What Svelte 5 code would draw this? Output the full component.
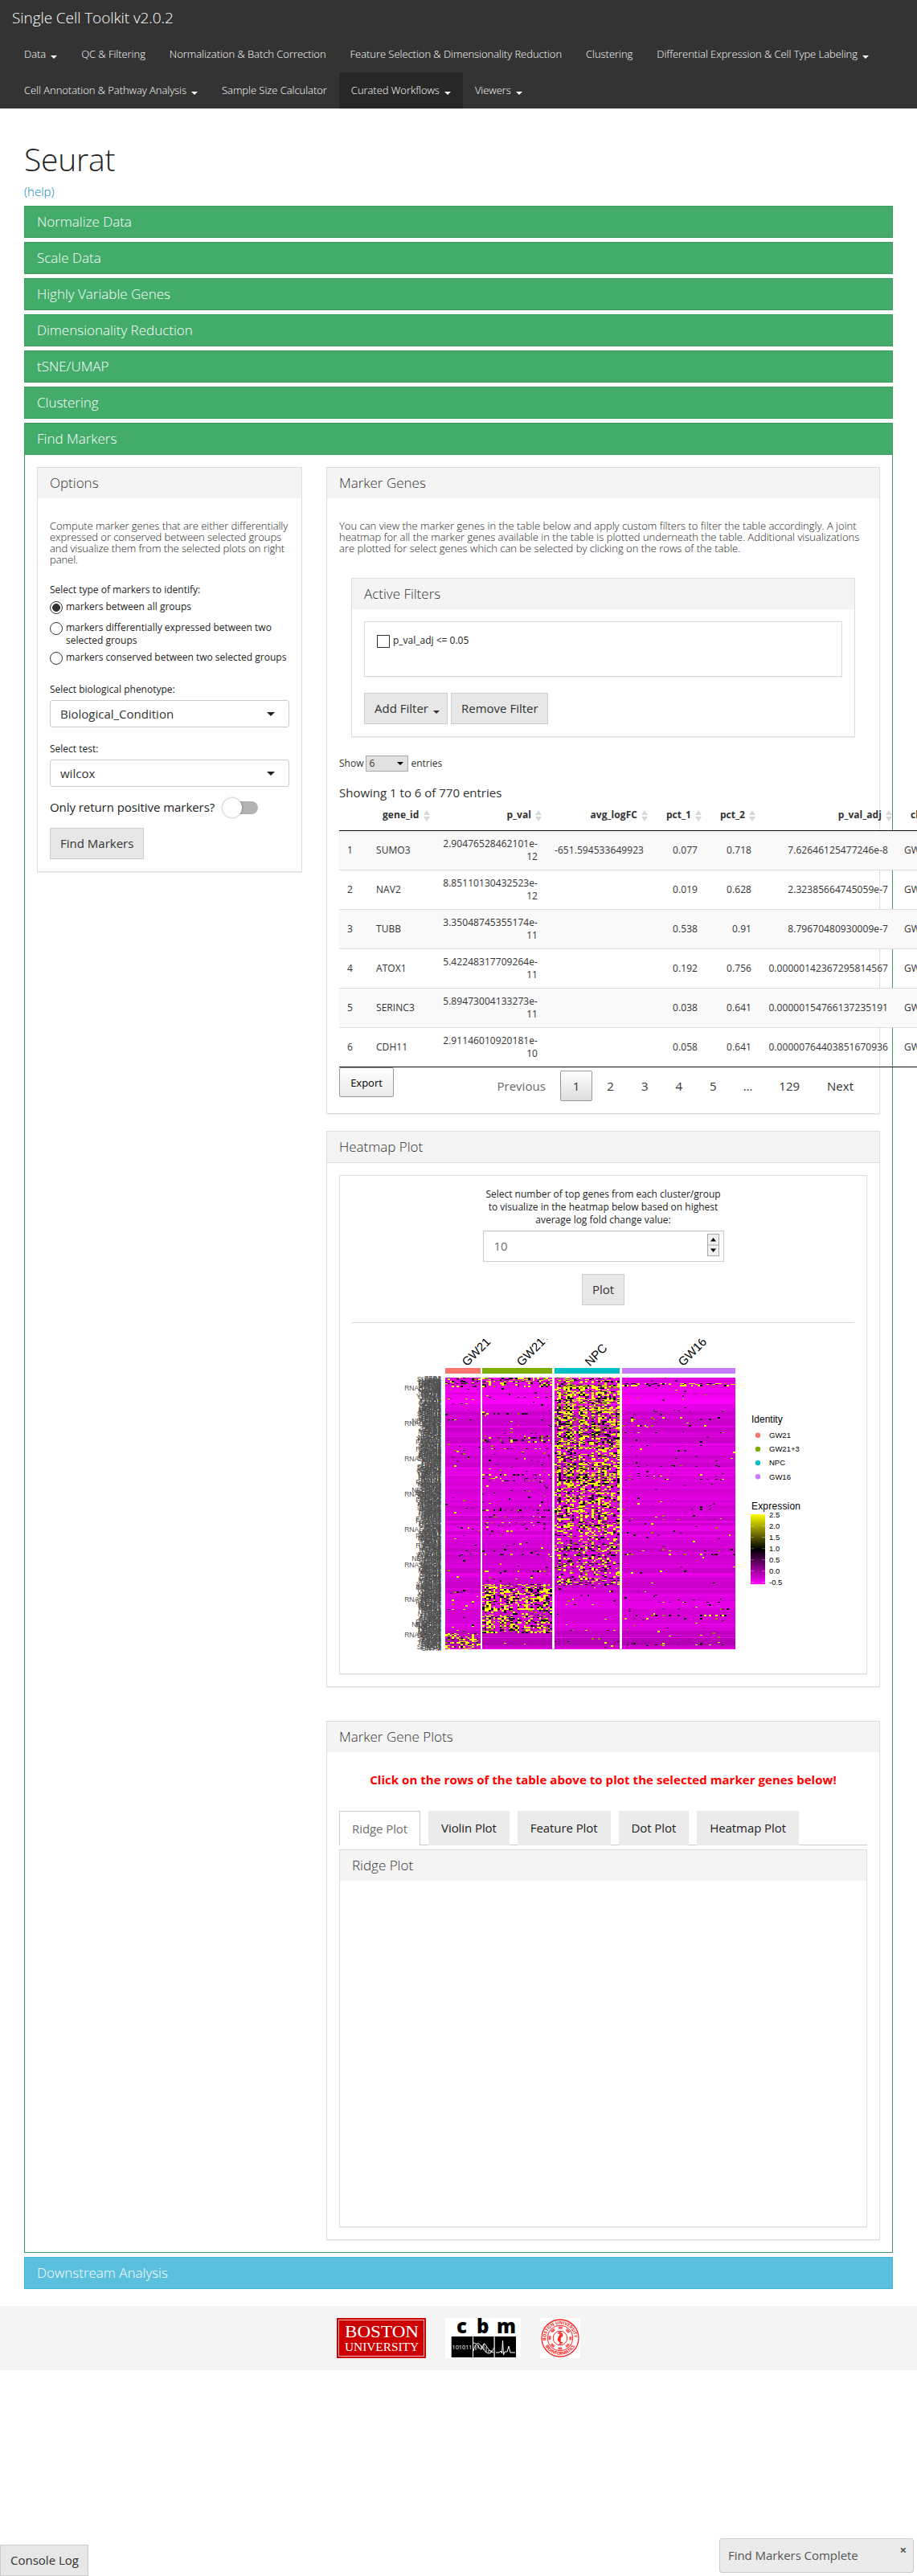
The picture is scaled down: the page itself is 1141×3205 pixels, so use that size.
<script>
  const navRows = [
    [
      { label: 'Data', caret: true },
      { label: 'QC & Filtering' },
      { label: 'Normalization & Batch Correction' },
      { label: 'Feature Selection & Dimensionality Reduction' },
      { label: 'Clustering' },
      { label: 'Differential Expression & Cell Type Labeling', caret: true },
    ],
    [
      { label: 'Cell Annotation & Pathway Analysis', caret: true },
      { label: 'Sample Size Calculator' },
      { label: 'Curated Workflows', caret: true, active: true },
      { label: 'Viewers', caret: true },
    ],
  ];

  const steps = [
    'Normalize Data',
    'Scale Data',
    'Highly Variable Genes',
    'Dimensionality Reduction',
    'tSNE/UMAP',
    'Clustering',
  ];

  const columns = ['', 'gene_id', 'p_val', 'avg_logFC', 'pct_1', 'pct_2', 'p_val_adj', 'cluster'];
  const rows = [
    ['1', 'SUMO3', '2.90476528462101e-12', '-651.594533649923', '0.077', '0.718', '7.62646125477246e-8', 'GW21'],
    ['2', 'NAV2', '8.85110130432523e-12', '', '0.019', '0.628', '2.32385664745059e-7', 'GW21'],
    ['3', 'TUBB', '3.35048745355174e-11', '', '0.538', '0.91', '8.79670480930009e-7', 'GW21'],
    ['4', 'ATOX1', '5.42248317709264e-11', '', '0.192', '0.756', '0.00000142367295814567', 'GW21'],
    ['5', 'SERINC3', '5.89473004133273e-11', '', '0.038', '0.641', '0.00000154766137235191', 'GW21'],
    ['6', 'CDH11', '2.91146010920181e-10', '', '0.058', '0.641', '0.00000764403851670936', 'GW21'],
  ];

  const tabs = ['Ridge Plot', 'Violin Plot', 'Feature Plot', 'Dot Plot', 'Heatmap Plot'];

  // Heatmap: coordinates are in the plot's own space, 560 x 400.
  const TOP = 48;
  const ROWS = 338;
  const groups = [
    { name: 'GW21', x: 74, w: 44, n: 16, color: '#f8766d', lx: 101 },
    { name: 'GW21+3', x: 120, w: 87, n: 32, color: '#7cae00', lx: 169 },
    { name: 'NPC', x: 210, w: 81, n: 30, color: '#00bfc4', lx: 254 },
    { name: 'GW16', x: 294, w: 141, n: 51, color: '#c77cff', lx: 370 },
  ];

  let seed = 20217;
  function rnd() {
    seed = (seed * 1664525 + 1013904223) % 4294967296;
    return seed / 4294967296;
  }

  function density(g, f) {
    if (g === 0) {
      if (f < 0.035) return 0.22;
      return f > 0.938 ? 0.42 : 0.018;
    }
    if (g === 1) {
      if (f < 0.035) return 0.32;
      if (f < 0.76) return 0.035;
      return f < 0.94 ? 0.46 : 0.01;
    }
    if (g === 2) {
      if (f < 0.025) return 0.35;
      if (f < 0.12) return 0.74;
      if (f < 0.4) return 0.54;
      if (f < 0.55) return 0.44;
      return f < 0.762 ? 0.33 : 0.015;
    }
    return f > 0.02 && f < 0.028 ? 0.4 : 0.02;
  }

  const palette = ['#ffff00', '#000000', '#8b8b00', '#3d003d', '#d4d400', '#8a008a'];
  const cells = palette.map(() => '');
  const stripes = [];
  let level = 230;
  for (let r = 0; r < ROWS; r++) {
    const f = r / ROWS;
    const base = f < 0.1 ? 236 : f > 0.93 ? 188 : 216;
    if (rnd() < 0.35) level = base + (rnd() - 0.5) * 36;
    const line = rnd() < 0.03 ? 255 : Math.round(level);
    stripes.push({ y: TOP + r, fill: `rgb(${line},0,${line})` });
  }
  groups.forEach((g, gi) => {
    const cw = g.w / g.n;
    const weight = Array.from({ length: g.n }, () => 0.35 + rnd() * 1.3);
    let skip = 0;
    for (let r = 0; r < ROWS; r += skip) {
      skip = rnd() < 0.45 ? 2 : 1;
      const h = Math.min(skip, ROWS - r);
      const f = r / ROWS;
      const d = density(gi, f);
      const busy = d < 0.1 ? (rnd() < 0.08 ? 7 : 0.7) : 0.6 + rnd() * 0.8;
      const dense = d > 0.3;
      const yellow = gi === 0 && f > 0.9 ? 0.72 : 0.5;
      for (let c = 0; c < g.n; c++) {
        if (rnd() < d * busy * weight[c]) {
          const t = rnd();
          const k = dense
            ? t < yellow ? 0 : t < 0.74 ? 1 : t < 0.82 ? 2 : t < 0.91 ? 3 : t < 0.94 ? 4 : 5
            : t < 0.2 ? 0 : t < 0.48 ? 1 : t < 0.6 ? 2 : t < 0.78 ? 3 : t < 0.82 ? 4 : 5;
          const x1 = Math.round(g.x + c * cw);
          const x2 = Math.round(g.x + (c + 1) * cw);
          cells[k] += `M${x1} ${TOP + r}h${x2 - x1}v${h}h${x1 - x2}z`;
        }
      }
    }
  });

  const genes = [
    'TUBB3', 'SUMO3', 'NAV2', 'STMN2', 'CDH11', 'LMO3', 'MEF2C', 'FEZF2', 'FAM134', 'ATOX1', 'NFIB', 'MAPT',
    'DCX', 'FABP7', 'SOX11', 'ZEB2', 'APP', 'NEUROD', 'CRYM', 'RAB3A', 'NUSAP', 'TMEM2', 'SYT4', 'YWHAB',
    'BCL11', 'NRXN1', 'TBR1', 'ENC1', 'CALM2', 'KIF5C', 'GRIA2', 'RNF165', 'LINC1', 'ITM2B', 'PAK3', 'UCHL1',
  ];
  const geneLabels = Array.from({ length: 330 }, (_, i) => ({
    text: i % 43 === 12 ? 'RNASEH2B' : genes[Math.floor(rnd() * genes.length)],
    y: 52 + i * 1.02,
  }));

  const scale = ['2.5', '2.0', '1.5', '1.0', '0.5', '0.0', '-0.5'];
</script>

<nav class="navbar">
  <div class="brand">Single Cell Toolkit v2.0.2</div>
  {#each navRows as row}
    <div class="nav-row">
      {#each row as item}
        <span class="nav-item" class:active={item.active}>
          {item.label}{#if item.caret}<i class="caret"></i>{/if}
        </span>
      {/each}
    </div>
  {/each}
</nav>

<main>
  <h1>Seurat</h1>
  <a class="help" href="#help">(help)</a>

  {#each steps as step}
    <div class="step">{step}</div>
  {/each}

  <section class="open-step">
    <div class="step-head">Find Markers</div>
    <div class="split">
      <aside class="panel">
        <div class="head">Options</div>
        <div class="options">
          <p class="note">Compute marker genes that are either differentially expressed or conserved between selected groups and visualize them from the selected plots on right panel.</p>
          <div class="label first">Select type of markers to identify:</div>
          <div class="radio r1"><i class="dot on"></i><span>markers between all groups</span></div>
          <div class="radio r2"><i class="dot"></i><span>markers differentially expressed between two selected groups</span></div>
          <div class="radio"><i class="dot"></i><span>markers conserved between two selected groups</span></div>
          <div class="label spaced">Select biological phenotype:</div>
          <div class="picker"><span>Biological_Condition</span><i class="arrow"></i></div>
          <div class="label mid">Select test:</div>
          <div class="picker"><span>wilcox</span><i class="arrow"></i></div>
          <div class="toggle-row"><span>Only return positive markers?</span><i class="toggle"></i></div>
          <button class="btn">Find Markers</button>
        </div>
      </aside>

      <div class="results">
        <section class="panel genes">
          <div class="head">Marker Genes</div>
          <p class="note wide">You can view the marker genes in the table below and apply custom filters to filter the table accordingly. A joint heatmap for all the marker genes available in the table is plotted underneath the table. Additional visualizations are plotted for select genes which can be selected by clicking on the rows of the table.</p>

          <div class="panel filters">
            <div class="head">Active Filters</div>
            <div class="filter-box"><i class="check"></i><span>p_val_adj &lt;= 0.05</span></div>
            <div class="buttons">
              <button class="btn add">Add Filter<i class="caret"></i></button>
              <button class="btn remove">Remove Filter</button>
            </div>
          </div>

          <div class="show">
            <span>Show</span>
            <span class="count">6<i class="arrow small"></i></span>
            <span>entries</span>
          </div>
          <div class="info">Showing 1 to 6 of 770 entries</div>

          <table>
            <colgroup>
              {#each columns as c, i}<col class="c{i}" />{/each}
            </colgroup>
            <thead>
              <tr>
                {#each columns as c, i}
                  <th class:left={i === 1 || i === 7}>
                    {c}{#if i > 0}<svg class="sort" viewBox="0 0 8 14"><path d="M4 0L8 6H0zM4 14L0 8H8z" /></svg>{/if}
                  </th>
                {/each}
              </tr>
            </thead>
            <tbody>
              {#each rows as row}
                <tr>
                  {#each row as cell, i}<td class:num={i > 1 && i < 7}>{cell}</td>{/each}
                </tr>
              {/each}
            </tbody>
          </table>

          <div class="table-foot">
            <button class="export">Export</button>
            <div class="pages">
              <span class="page muted">Previous</span>
              <span class="page current">1</span>
              <span class="page">2</span>
              <span class="page">3</span>
              <span class="page">4</span>
              <span class="page">5</span>
              <span class="dots">…</span>
              <span class="page">129</span>
              <span class="page">Next</span>
            </div>
          </div>
        </section>

        <section class="panel heat">
          <div class="head ruled">Heatmap Plot</div>
          <div class="heat-box">
            <div class="heat-label">Select number of top genes from each cluster/group to visualize in the heatmap below based on highest average log fold change value:</div>
            <div class="number">
              <span>10</span>
              <svg class="spin" viewBox="0 0 15 28">
                <rect x=".5" y=".5" width="14" height="27" fill="#f0f0f0" stroke="#a8a8a8" />
                <path d="M0 14H15" stroke="#a8a8a8" />
                <path d="M7.5 5L11 9.500H4zM7.5 23L4 18.500H11z" fill="#000" />
              </svg>
            </div>
            <button class="btn plot-btn">Plot</button>
            <hr />
            <svg class="heatmap" viewBox="0 0 560 400" width="560" height="400">
              <defs>
                <linearGradient id="expr" x1="0" y1="0" x2="0" y2="1">
                  <stop offset="0" stop-color="#ff0" />
                  <stop offset=".5" stop-color="#000" />
                  <stop offset="1" stop-color="#f0f" />
                </linearGradient>
                <clipPath id="labels"><rect x="0" y="0" width="560" height="40" /></clipPath>
              </defs>
              <g clip-path="url(#labels)">
                {#each groups as g}
                  <text class="group" transform="translate({g.lx} 34.5) rotate(-45)">{g.name}</text>
                {/each}
              </g>
              {#each groups as g}
                <rect x={g.x} y="36" width={g.w} height="7" fill={g.color} />
              {/each}
              <g shape-rendering="crispEdges">
                {#each groups as g}
                  {#each stripes as s}
                    <rect x={g.x} y={s.y} width={g.w} height="1" fill={s.fill} />
                  {/each}
                {/each}
                {#each cells as d, i}
                  <path {d} fill={palette[i]} />
                {/each}
              </g>
              {#each geneLabels as l}
                <text class="gene" x="69" y={l.y}>{l.text}</text>
              {/each}
              <text class="legend" x="455" y="104">Identity</text>
              {#each groups as g, i}
                <circle cx="463" cy={119.7 + i * 17.2} r="3.200" fill={g.color} />
                <text class="key" x="477" y={123 + i * 17.2}>{g.name}</text>
              {/each}
              <text class="legend" x="455" y="212" textLength="61">Expression</text>
              <rect x="454" y="218" width="18" height="87" fill="url(#expr)" />
              {#each scale as s, i}
                <path d="M454 {218.7 + i * 14}h4M468 {218.7 + i * 14}h4" stroke="#fff" stroke-opacity=".5" stroke-width=".7" />
                <text class="key" x="477" y={222 + i * 14}>{s}</text>
              {/each}
            </svg>
          </div>
        </section>

        <section class="panel plots">
          <div class="head">Marker Gene Plots</div>
          <div class="warning">Click on the rows of the table above to plot the selected marker genes below!</div>
          <div class="tabs">
            {#each tabs as tab, i}
              <span class="tab" class:selected={i === 0}>{tab}</span>
            {/each}
          </div>
          <div class="panel ridge">
            <div class="head">Ridge Plot</div>
          </div>
        </section>
      </div>
    </div>
  </section>

  <div class="step downstream">Downstream Analysis</div>
</main>

<footer>
  <svg width="111" height="50" viewBox="0 0 111 50">
    <rect width="111" height="50" fill="#c00" />
    <rect x="2.500" y="2.500" width="106" height="45" fill="none" stroke="#f3b5b5" />
    <text class="bu" x="10" y="24" font-size="20" textLength="92" lengthAdjust="spacingAndGlyphs">BOSTON</text>
    <text class="bu" x="10" y="40.500" font-size="14" textLength="92" lengthAdjust="spacingAndGlyphs">UNIVERSITY</text>
  </svg>
  <svg width="94" height="50" viewBox="0 0 94 50">
    <rect width="94" height="50" fill="#fff" />
    <text class="cbm" x="14" y="19">c</text>
    <text class="cbm" x="39" y="19">b</text>
    <text class="cbm" x="64" y="19">m</text>
    <path d="M7.700 23H34V49H7.700zM35 23H60.500V49H35zM61.700 23H88V49H61.700z" fill="#000" />
    <text class="bits" x="8.500" y="38.500" textLength="25" lengthAdjust="spacingAndGlyphs">101011</text>
    <g fill="none" stroke="#fff">
      <path d="M35 41C38 30 41 30 44 34S51 44 54 44S59 41 60.500 37M35 31C38 31 40 33 43 38S47 30 49 32S55 43 60.500 43" />
      <path d="M38 34V40M41 33V38M45 34V39M48 32V40M51 36V43M54 40V43M57 40V43" stroke-width=".9" />
      <path d="M63 43H67L69 41L70.500 44L71.500 28L72.500 46L74 42H77L79 35L81 43H87" />
    </g>
  </svg>
  <svg width="50" height="50" viewBox="0 0 50 50">
    <rect width="50" height="50" fill="#fff" />
    <g fill="none" stroke="#f22">
      <circle cx="25" cy="25" r="23" stroke-width="1.300" />
      <circle cx="25" cy="25" r="15.800" />
      <circle cx="25" cy="25" r="13" stroke-width="3" stroke-dasharray="5 5.210" stroke-dashoffset="2.5" stroke-opacity=".75" />
      <circle cx="25" cy="25" r="8.800" />
      <path d="M25 17V33M22 19C29 18 29 23 25 24S22 30 28 31M28 21C22 22 22 27 26 28" stroke-width="1.500" />
    </g>
    <defs>
      <path id="arc-top" d="M7.500 28A17.700 17.700 0 1 1 42.500 28" />
      <path id="arc-low" d="M5 31A20.900 20.900 0 0 0 45 31" />
    </defs>
    <text class="seal"><textPath href="#arc-top" textLength="57">BOSTON UNIVERSITY</textPath></text>
    <text class="seal"><textPath href="#arc-low" startOffset="4" textLength="45">BIOINFORMATICS</textPath></text>
  </svg>
</footer>

<div class="bottom">
  <button class="btn console">Console Log</button>
  <div class="notice"><span>Find Markers Complete</span><b>×</b></div>
</div>

<style>
  :global(*) {
    box-sizing: border-box;
  }
  :global(body) {
    background: #fff;
    color: #222;
    font: 15px/21px 'Open Sans', sans-serif;
    overflow-x: hidden;
  }
  .navbar {
    height: 135px;
    background: #333;
    color: #fff;
  }
  .brand {
    height: 45px;
    padding-left: 15px;
    font-size: 19px;
    font-weight: 300;
    line-height: 44px;
    letter-spacing: -0.08px;
  }
  .nav-row {
    display: flex;
    height: 45px;
    padding-left: 15px;
  }
  .nav-item {
    padding: 0 15px;
    font-size: 13px;
    font-weight: 300;
    line-height: 45px;
    white-space: nowrap;
    letter-spacing: -0.045px;
  }
  .active {
    background: #272727;
  }
  .caret {
    display: inline-block;
    margin-left: 6px;
    border: 4px solid transparent;
    border-top-color: currentColor;
    border-bottom: 0;
    vertical-align: -1px;
  }
  main {
    padding: 0 30px;
  }
  h1 {
    margin: 0;
    padding-top: 40px;
    height: 93px;
    font-size: 39px;
    font-weight: 300;
    line-height: 46px;
    letter-spacing: -0.2px;
  }
  .help {
    display: block;
    height: 28px;
    line-height: 21px;
    color: #008cba;
    font-weight: 300;
    text-decoration: none;
  }
  .step,
  .step-head {
    height: 40px;
    margin-bottom: 5px;
    padding-left: 15px;
    border: 1px solid #3c9a5f;
    background: #43ac6a;
    color: #fff;
    font-size: 17px;
    font-weight: 300;
    line-height: 38px;
  }
  .open-step {
    height: 2277px;
    margin-bottom: 5px;
    border: 1px solid #3c9a5f;
  }
  .step-head {
    height: 39px;
    margin: 0;
    border-width: 0 0 1px;
  }
  .downstream {
    margin: 0;
    border-color: #3db5d8;
    background: #5bc0de;
  }
  .split {
    display: flex;
    align-items: flex-start;
    gap: 30px;
    padding: 15px;
  }
  .panel {
    border: 1px solid #ddd;
    box-shadow: 0 1px 1px rgba(0, 0, 0, 0.05);
  }
  aside {
    flex: none;
    width: 330px;
    height: 504px;
  }
  .results {
    flex: none;
    width: 689px;
  }
  .head {
    height: 38px;
    padding-left: 15px;
    background: #f4f4f4;
    color: #333;
    font-size: 17px;
    font-weight: 300;
    line-height: 38px;
  }
  .options {
    padding: 27px 15px 0;
  }
  .note {
    width: 304px;
    margin: 0 -6px 0 0;
    font-size: 13px;
    font-weight: 300;
    line-height: 14px;
    letter-spacing: -0.06px;
  }
  .label {
    font-size: 12px;
    line-height: 16px;
  }
  .first {
    margin: 23px 0 5px;
  }
  .spaced {
    margin: 24px 0 5px;
  }
  .mid {
    margin: 19px 0 5px;
  }
  .radio {
    display: flex;
    gap: 4px;
    font-size: 12px;
    line-height: 16px;
    white-space: nowrap;
  }
  .r1 {
    margin-bottom: 10px;
  }
  .r2 {
    margin-bottom: 5px;
    white-space: normal;
  }
  .dot {
    flex: none;
    width: 16px;
    height: 16px;
    margin: 1px 0 -1px;
    border: 1px solid #333;
    border-radius: 50%;
  }
  .on {
    background: radial-gradient(#333 0 4.600px, #fff 5.200px);
  }
  .picker {
    display: flex;
    align-items: center;
    justify-content: space-between;
    height: 34px;
    padding: 0 17px 0 12px;
    border: 1px solid #ccc;
    border-radius: 3px;
    color: #333;
  }
  .arrow {
    border: 5px solid transparent;
    border-top-color: #222;
    border-bottom: 0;
  }
  .toggle-row {
    display: flex;
    align-items: center;
    justify-content: space-between;
    width: 259px;
    height: 21px;
    margin: 15px 0;
    white-space: nowrap;
    letter-spacing: -0.06px;
  }
  .toggle {
    display: flex;
    align-items: center;
    width: 31px;
    height: 16px;
    border-radius: 8px;
    background: #b2b2b2;
  }
  .toggle::before {
    content: '';
    flex: none;
    width: 24px;
    height: 24px;
    margin-left: -13px;
    border-radius: 50%;
    background: #fff;
    box-shadow: 0 0 3px rgba(0, 0, 0, 0.4);
  }
  .btn {
    display: block;
    flex: none;
    height: 39px;
    padding: 0 12px;
    border: 1px solid #ccc;
    background: #e7e7e7;
    color: #333;
    font: 15px/21px 'Open Sans', sans-serif;
    white-space: nowrap;
  }
  .genes {
    height: 805px;
  }
  .wide {
    width: auto;
    margin: 27px 12px 0 15px;
    letter-spacing: 0;
  }
  .filters {
    width: 627px;
    height: 198px;
    margin: 30px 0 0 30px;
  }
  .filter-box {
    display: flex;
    gap: 4px;
    width: 595px;
    height: 69px;
    margin: 15px 0 20px 15px;
    padding: 15px;
    border: 1px solid #ddd;
    box-shadow: 0 1px 1px rgba(0, 0, 0, 0.05);
    font-size: 12px;
    line-height: 16px;
  }
  .check {
    width: 16px;
    height: 16px;
    margin-top: 1px;
    border: 1px solid #333;
  }
  .buttons {
    display: flex;
    gap: 4px;
    padding-left: 15px;
  }
  .add {
    width: 104px;
  }
  .remove {
    width: 121px;
  }
  .show {
    display: flex;
    align-items: center;
    gap: 3px;
    height: 21px;
    margin: 22px 0 0 15px;
    color: #333;
    font-size: 12px;
  }
  .count {
    display: flex;
    align-items: center;
    justify-content: space-between;
    width: 53px;
    height: 20px;
    padding: 0 5px 0 3px;
    border: 1px solid #aaa;
    background: #e1e1e1;
  }
  .small {
    border-width: 4px 4px 0;
    border-top-color: #000;
  }
  .info {
    margin: 16px 0 0 15px;
    color: #333;
  }
  table {
    width: 772px;
    margin: 0 0 0 15px;
    border-collapse: separate;
    border-spacing: 0;
    border-bottom: 1px solid #111;
    table-layout: fixed;
    color: #333;
    font-size: 12px;
    line-height: 16px;
    letter-spacing: 0.06px;
  }
  .c0 {
    width: 36px;
  }
  .c1 {
    width: 82px;
  }
  .c2 {
    width: 139px;
  }
  .c3 {
    width: 132px;
  }
  .c4,
  .c5 {
    width: 67px;
  }
  .c6 {
    width: 170px;
  }
  .c7 {
    width: 79px;
  }
  th {
    position: relative;
    height: 37px;
    padding: 0 18px 2px 0;
    border-bottom: 1px solid #111;
    text-align: right;
  }
  th.left {
    padding-left: 18px;
    padding-right: 0;
    text-align: left;
  }
  .sort {
    position: absolute;
    right: 5px;
    top: 11px;
    width: 8px;
    height: 14px;
    fill: #d8d8d8;
  }
  td {
    height: 49px;
    padding: 0 10px;
    border-bottom: 1px solid #ddd;
  }
  tr:last-child td {
    border-bottom: 0;
    height: 48px;
  }
  tbody tr:nth-child(odd) {
    background: #f9f9f9;
  }
  .num {
    text-align: right;
  }
  .table-foot {
    display: flex;
    justify-content: space-between;
    align-items: flex-start;
    padding: 0 16px 0 15px;
  }
  .export {
    width: 68px;
    height: 37px;
    padding: 0;
    border: 1px solid #999;
    border-radius: 2px;
    background: linear-gradient(#fff, #e9e9e9);
    color: #000;
    font: 13px 'Open Sans', sans-serif;
  }
  .pages {
    display: flex;
    align-items: center;
    gap: 2px;
    margin-top: 4px;
    color: #333;
  }
  .page {
    height: 38px;
    padding: 0 15px;
    border: 1px solid transparent;
    border-radius: 2px;
    line-height: 37px;
  }
  .current {
    border-color: #979797;
    background: linear-gradient(#fff, #dcdcdc);
  }
  .muted {
    color: #666;
  }
  .dots {
    padding: 0 15px;
  }
  .heat {
    height: 692px;
    margin-top: 21px;
  }
  .ruled {
    height: 39px;
    border-bottom: 1px solid #ddd;
  }
  .heat-box {
    display: flex;
    flex-direction: column;
    align-items: center;
    width: 657px;
    height: 621px;
    margin: 15px 0 0 15px;
    padding: 15px 15px 0;
    border: 1px solid #ddd;
    box-shadow: 0 1px 1px rgba(0, 0, 0, 0.05);
  }
  .heat-label {
    flex: none;
    width: 300px;
    margin-bottom: 5px;
    font-size: 12px;
    line-height: 16px;
    text-align: center;
  }
  .number {
    display: flex;
    flex: none;
    align-items: center;
    justify-content: space-between;
    width: 300px;
    height: 39px;
    padding: 0 5px 0 13px;
    border: 1px solid #ccc;
    box-shadow: inset 0 1px 1px rgba(0, 0, 0, 0.08);
    color: #6f6f6f;
  }
  .spin {
    width: 15px;
    height: 28px;
    margin-top: -4px;
  }
  .plot-btn {
    margin-top: 15px;
  }
  hr {
    flex: none;
    width: 100%;
    margin: 21px 0 20px;
    border: 0;
    border-top: 1px solid #ddd;
  }
  .heatmap {
    flex: none;
    align-self: flex-start;
    margin-left: 42px;
  }
  .heatmap text {
    font-family: 'Liberation Sans', sans-serif;
  }
  .heatmap .group {
    font-size: 15px;
  }
  .heatmap .gene {
    fill: #4d4d4d;
    font-size: 8.500px;
    text-anchor: end;
  }
  .heatmap .legend {
    font-size: 12px;
  }
  .heatmap .key {
    font-size: 9.500px;
  }
  .plots {
    height: 646px;
    margin-top: 42px;
  }
  .warning {
    margin: 24px 0 28px;
    color: #f00;
    font-weight: 700;
    text-align: center;
    white-space: nowrap;
    letter-spacing: 0.05px;
  }
  .tabs {
    display: flex;
    gap: 10px;
    height: 43px;
    margin: 0 15px;
    border-bottom: 1px solid #ccc;
  }
  .tab {
    height: 43px;
    padding: 0 16px;
    background: #ebebeb;
    line-height: 43px;
    white-space: nowrap;
    letter-spacing: -0.08px;
  }
  .selected {
    padding: 0 15px;
    border: 1px solid #ccc;
    border-bottom: 0;
    background: #fff;
    color: #6f6f6f;
  }
  .ridge {
    height: 470px;
    margin: 5px 15px 0;
  }
  footer {
    display: flex;
    justify-content: center;
    gap: 24px;
    height: 80px;
    margin-top: 21px;
    padding-top: 15px;
    background: #f4f4f4;
  }
  .bu {
    fill: #fff;
    font-family: 'Liberation Serif', serif;
  }
  .cbm {
    font-size: 24px;
    font-weight: 800;
  }
  .bits {
    fill: #fff;
    font-size: 8px;
  }
  .seal {
    fill: #f22;
    font-size: 5.500px;
    font-weight: 700;
  }
  .bottom {
    display: flex;
    justify-content: space-between;
    align-items: flex-end;
    height: 256px;
    padding-right: 4px;
  }
  .console {
    width: 110px;
  }
  .notice {
    display: flex;
    justify-content: space-between;
    width: 242px;
    height: 43px;
    margin-bottom: 4px;
    padding: 10px 8px 0 10px;
    border: 1px solid #ccc;
    border-radius: 3px;
    background: #ebebeb;
    color: #555;
    letter-spacing: -0.05px;
  }
  .notice b {
    line-height: 7px;
    font-size: 15px;
  }
</style>
